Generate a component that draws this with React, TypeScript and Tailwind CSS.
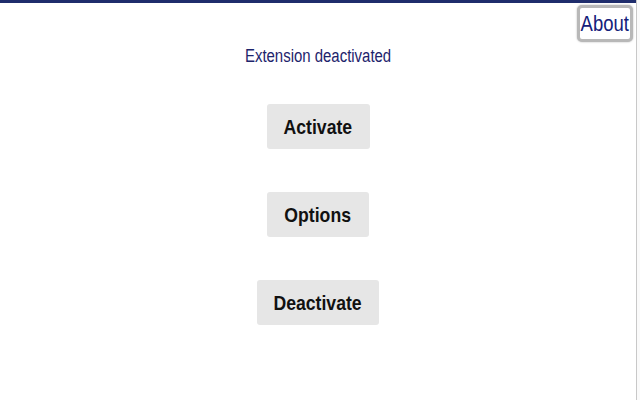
import React from 'react';

const ACTIONS = [
  { id: 'activate', label: 'Activate', width: 'w-[103px]' },
  { id: 'options', label: 'Options', width: 'w-[102px]' },
  { id: 'deactivate', label: 'Deactivate', width: 'w-[122px]' },
];

export default function App() {
  return (
    <div className="w-[640px] h-[400px] bg-[#fafafa] overflow-hidden font-['Liberation_Sans',Arial,sans-serif]">
      <div className="relative w-[637px] h-[400px] bg-white border-r border-[#c8c8c8]">
        {/* Top accent bar */}
        <div className="h-[3px] bg-[#1f2d6c]" />

        {/* About link, top right */}
        <button className="absolute top-[5px] right-[3px] w-[56px] h-[37px] flex items-center justify-center rounded-[5px] border-[3px] border-[#b8b8b8] bg-white shadow-[0_0_2px_rgba(0,0,0,0.3)]">
          <span className="inline-block scale-x-[0.84] text-[22px] leading-[24px] text-[#14207a]">About</span>
        </button>

        <div className="flex flex-col items-center pt-[43px]">
          <p className="text-[18px] leading-[20px] text-[#1d246c]">
            <span className="inline-block scale-x-[0.83]">Extension deactivated</span>
          </p>

          <div className="mt-[38px] flex flex-col items-center gap-[43px]">
            {ACTIONS.map((a) => (
              <button
                key={a.id}
                className={`${a.width} h-[45px] flex items-center justify-center rounded-[3px] bg-[#e6e6e6] text-[#111] font-bold`}
              >
                <span className="inline-block scale-x-[0.84] text-[21px] leading-[24px] whitespace-nowrap">{a.label}</span>
              </button>
            ))}
          </div>
        </div>
      </div>
    </div>
  );
}
